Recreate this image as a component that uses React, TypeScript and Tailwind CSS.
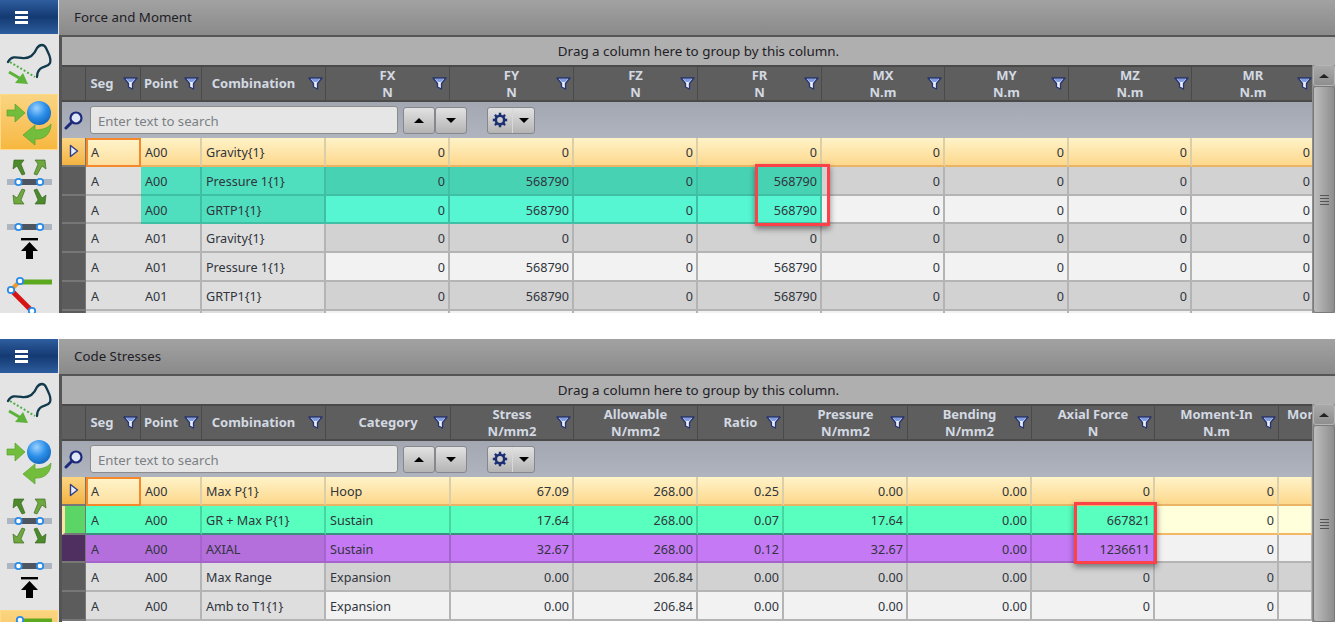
import type { ReactNode } from "react";

type Col = { title: string; unit?: string; width: string; pad?: string; clipped?: boolean };

const fixedCols: Col[] = [
  { title: "Seg", width: "w-[55px]", pad: "pr-[22px]" },
  { title: "Point", width: "w-[61px]", pad: "pr-[20px]" },
  { title: "Combination", width: "w-[124px]", pad: "pr-[20px]" },
];

const forceCols: Col[] = [
  { title: "FX", unit: "N", width: "w-[124px]" },
  { title: "FY", unit: "N", width: "w-[124px]" },
  { title: "FZ", unit: "N", width: "w-[124px]" },
  { title: "FR", unit: "N", width: "w-[124px]" },
  { title: "MX", unit: "N.m", width: "w-[123px]" },
  { title: "MY", unit: "N.m", width: "w-[124px]" },
  { title: "MZ", unit: "N.m", width: "w-[123px]" },
  { title: "MR", unit: "N.m", width: "w-[123px]" },
];

const stressCols: Col[] = [
  { title: "Category", width: "w-[125px]" },
  { title: "Stress", unit: "N/mm2", width: "w-[123px]" },
  { title: "Allowable", unit: "N/mm2", width: "w-[124px]" },
  { title: "Ratio", width: "w-[86px]" },
  { title: "Pressure", unit: "N/mm2", width: "w-[124px]" },
  { title: "Bending", unit: "N/mm2", width: "w-[124px]" },
  { title: "Axial Force", unit: "N", width: "w-[123px]" },
  { title: "Moment-In", unit: "N.m", width: "w-[124px]" },
  { title: "Mor", unit: "\u00a0", width: "w-[34px]", clipped: true },
];

const GRAY = "bg-[#d2d2d2]";
const LIGHT = "bg-[#f2f2f2]";
const FIXED = "bg-[#dedede]";
const SELECTED = "bg-gradient-to-b from-[#fff3c8] to-[#fdd88c]";
const PLAIN_LINE = "border-[#b4b4b4]";

type Row = {
  seg: string;
  point: string;
  combination: string;
  values: string[];
  bg: string;
  fixedBg?: string;
  segBg?: string;
  indicator?: string;
  valueBgs?: string[];
  selected?: boolean;
  plainLine?: string;
  line?: string;
};

const teal = { line: "border-[#3fbfa4]", fixedBg: "bg-[#4fdfbe]", segBg: FIXED };
const selectedLine = "border-r-[#dccfa8] border-b-[#e9b465]";

const forceRows: Row[] = [
  { seg: "A", point: "A00", combination: "Gravity{1}", values: ["0", "0", "0", "0", "0", "0", "0", "0"], bg: SELECTED, selected: true, plainLine: selectedLine, line: selectedLine },
  {
    seg: "A", point: "A00", combination: "Pressure 1{1}", values: ["0", "568790", "0", "568790", "0", "0", "0", "0"], bg: GRAY, ...teal,
    valueBgs: ["bg-[#48d2b4]", "bg-[#48d2b4]", "bg-[#48d2b4]", "bg-[#48d2b4]"],
  },
  {
    seg: "A", point: "A00", combination: "GRTP1{1}", values: ["0", "568790", "0", "568790", "0", "0", "0", "0"], bg: LIGHT, ...teal,
    valueBgs: ["bg-[#56f6d3]", "bg-[#56f6d3]", "bg-[#56f6d3]", "bg-[#56f6d3]"],
  },
  { seg: "A", point: "A01", combination: "Gravity{1}", values: ["0", "0", "0", "0", "0", "0", "0", "0"], bg: GRAY },
  { seg: "A", point: "A01", combination: "Pressure 1{1}", values: ["0", "568790", "0", "568790", "0", "0", "0", "0"], bg: LIGHT },
  { seg: "A", point: "A01", combination: "GRTP1{1}", values: ["0", "568790", "0", "568790", "0", "0", "0", "0"], bg: GRAY },
  { seg: "", point: "", combination: "", values: ["", "", "", "", "", "", "", ""], bg: LIGHT },
];

const mint = "bg-[#58ffbe]";
const purple = "bg-[#c679f5]";

const stressRows: Row[] = [
  { seg: "A", point: "A00", combination: "Max P{1}", values: ["Hoop", "67.09", "268.00", "0.25", "0.00", "0.00", "0", "0", ""], bg: SELECTED, selected: true, plainLine: selectedLine, line: selectedLine },
  {
    seg: "A", point: "A00", combination: "GR + Max P{1}", values: ["Sustain", "17.64", "268.00", "0.07", "17.64", "0.00", "667821", "0", ""], bg: "bg-[#ffffdc]", fixedBg: mint, segBg: mint,
    indicator: "border-l-[3px] border-l-[#ffe2a6] bg-[#5ad566]", plainLine: "border-r-[#d8d8c0] border-b-[#f6b765]", line: "border-r-[#46d8a0] border-b-[#3c8f80]",
    valueBgs: [mint, mint, mint, mint, mint, mint, mint],
  },
  {
    seg: "A", point: "A00", combination: "AXIAL", values: ["Sustain", "32.67", "268.00", "0.12", "32.67", "0.00", "1236611", "0", ""], bg: LIGHT, fixedBg: "bg-[#b46fdc]", segBg: "bg-[#b46fdc]", indicator: "bg-[#4e2f5f]", line: "border-[#a563cc]",
    valueBgs: [purple, purple, purple, purple, purple, purple, purple],
  },
  { seg: "A", point: "A00", combination: "Max Range", values: ["Expansion", "0.00", "206.84", "0.00", "0.00", "0.00", "0", "0", ""], bg: GRAY },
  { seg: "A", point: "A00", combination: "Amb to T1{1}", values: ["Expansion", "0.00", "206.84", "0.00", "0.00", "0.00", "0", "0", ""], bg: LIGHT },
];

function FilterIcon() {
  return (
    <svg width="15" height="15" viewBox="0 0 15 15" className="shrink-0">
      <path d="M1 2 H14 L9.5 7.5 V13 L5.5 11 V7.5 Z" fill="#e8eefa" stroke="#26336f" strokeWidth="1.3" strokeLinejoin="round" />
      <path d="M3 3 H12 L9 6 H6 Z" fill="#7f9ce0" />
    </svg>
  );
}

function HeaderCell({ col }: { col: Col }) {
  return (
    <div className={`${col.width} ${col.pad ?? ""} ${col.clipped ? "justify-start pl-[8px]" : "justify-center"} relative flex shrink-0 items-center overflow-hidden border-r border-[#4a4a4a] text-center text-[13px] leading-[17px] font-bold text-[#d3d9e2]`}>
      {col.unit ? (
        <div>
          <div className="whitespace-nowrap">{col.title}</div>
          <div className="whitespace-nowrap">{col.unit}</div>
        </div>
      ) : (
        <span className="whitespace-nowrap">{col.title}</span>
      )}
      {!col.clipped && (
        <span className="absolute top-[9px] right-[2px]">
          <FilterIcon />
        </span>
      )}
    </div>
  );
}

function Hamburger() {
  return (
    <div className="flex h-[34px] w-[58px] shrink-0 flex-col justify-center gap-[2px] bg-gradient-to-b from-[#2f5e9f] via-[#143a72] to-[#2d5d9e] pl-[15px]">
      <div className="h-[3px] w-[13px] bg-white" />
      <div className="h-[3px] w-[13px] bg-white" />
      <div className="h-[3px] w-[13px] bg-white" />
    </div>
  );
}

function Node({ x, y }: { x: number; y: number }) {
  return <circle cx={x} cy={y} r="3.2" fill="white" stroke="#2a8ce8" strokeWidth="1.8" />;
}

function NodeBar({ y }: { y: number }) {
  return (
    <>
      <rect x="7" y={y - 3} width="45" height="6" fill="#adb6c0" />
      <rect x="18" y={y - 3} width="22" height="6" fill="#4d5660" />
      <Node x={18.5} y={y} />
      <Node x={40} y={y} />
    </>
  );
}

function RouteIcon() {
  return (
    <svg width="58" height="60" viewBox="0 0 58 60">
      <path d="M8 28 C11 22 16 23 22 24 C29 25 34 21 37 14 C40 10 44 10 46 14 C48 19 52 24 50 29 C48 33 43 32 40 35 C37 38 37 40 37 43" fill="none" stroke="#123a4c" strokeWidth="2.3" strokeLinecap="round" />
      <path d="M10 28 L35 43" fill="none" stroke="#4fae45" strokeWidth="2" strokeDasharray="2 2" />
      <path d="M9 38 L21 45" fill="none" stroke="#5db33a" strokeWidth="3" />
      <path d="M28 50 L15 49 L23 39 Z" fill="#5db33a" />
    </svg>
  );
}

function ForceIcon() {
  return (
    <svg width="58" height="56" viewBox="0 0 58 56">
      <defs>
        <radialGradient id="ball" cx="0.4" cy="0.3" r="0.8">
          <stop offset="0" stopColor="#9ad2ff" />
          <stop offset="0.5" stopColor="#2b8ee8" />
          <stop offset="1" stopColor="#0f5fb5" />
        </radialGradient>
      </defs>
      <path d="M7 16 H15 V10 L25 19 L15 28 V22 H7 Z" fill="#72bd3c" stroke="#5aa02e" strokeWidth="0.7" />
      <circle cx="39" cy="19" r="12" fill="url(#ball)" />
      <path d="M23 41 L35 31 V36 C42 36 48 34 51 30 C51 40 44 46 35 45 V51 Z" fill="#72bd3c" stroke="#5aa02e" strokeWidth="0.7" />
    </svg>
  );
}

function ShrinkIcon() {
  return (
    <svg width="58" height="56" viewBox="0 0 58 56">
      <path d="M14 10 L24 10 L21 14 L25 24 L22 25 L17 16 L13 19 Z" fill="#4c8a2c" stroke="#2f5e1a" strokeWidth="0.6" />
      <path d="M45 10 L35 10 L38 14 L34 24 L37 25 L42 16 L46 19 Z" fill="#6fa83f" stroke="#2f5e1a" strokeWidth="0.6" />
      <path d="M14 54 L24 54 L21 50 L25 40 L22 39 L17 48 L13 45 Z" fill="#6fa83f" stroke="#2f5e1a" strokeWidth="0.6" />
      <path d="M45 54 L35 54 L38 50 L34 40 L37 39 L42 48 L46 45 Z" fill="#4c8a2c" stroke="#2f5e1a" strokeWidth="0.6" />
      <NodeBar y={32} />
    </svg>
  );
}

function PinIcon() {
  return (
    <svg width="58" height="65" viewBox="0 0 58 65">
      <NodeBar y={21} />
      <rect x="21" y="32" width="17" height="2.4" fill="#000" />
      <path d="M29.5 36 L38 45 H33 V53 H26 V45 H21 Z" fill="#000" />
    </svg>
  );
}

function SegmentIcon() {
  return (
    <svg width="58" height="50" viewBox="0 0 58 50">
      <path d="M20 11 H52" stroke="#5ca81f" strokeWidth="5" />
      <path d="M11 19 L20 10" stroke="#f19a27" strokeWidth="4" />
      <path d="M11 19 L32 40" stroke="#d61414" strokeWidth="5" />
      <Node x={20} y={10} />
      <Node x={11} y={19} />
      <Node x={32} y={40} />
    </svg>
  );
}

function Sidebar({ active }: { active: "force" | "segment" }) {
  return (
    <div className="flex w-[59px] shrink-0 flex-col bg-[#e4e4e4]">
      <Hamburger />
      <div className="h-[60px] w-[58px] shrink-0">
        <RouteIcon />
      </div>
      <div className={`h-[56px] w-[58px] shrink-0 ${active === "force" ? "bg-gradient-to-b from-[#fbd582] to-[#f6b73d] outline outline-1 -outline-offset-1 outline-[#ffd987]" : ""}`}>
        <ForceIcon />
      </div>
      <div className="h-[56px] w-[58px] shrink-0">
        <ShrinkIcon />
      </div>
      <div className="h-[65px] w-[58px] shrink-0">
        <PinIcon />
      </div>
      <div className={`h-[50px] w-[58px] shrink-0 ${active === "segment" ? "bg-gradient-to-b from-[#fbd582] to-[#f6b73d] outline outline-1 -outline-offset-1 outline-[#ffd987]" : ""}`}>
        <SegmentIcon />
      </div>
    </div>
  );
}

function Cell({ className, right, children }: { className: string; right?: boolean; children?: ReactNode }) {
  return (
    <div className={`${className} flex h-full shrink-0 items-center overflow-hidden border-r-2 border-b-2 pt-[4px] pr-[3px] pl-[4px] whitespace-nowrap ${right ? "justify-end" : ""}`}>
      {children}
    </div>
  );
}

function DataRow({ row, cols, numericFrom }: { row: Row; cols: Col[]; numericFrom: number }) {
  const indicator = row.selected ? "bg-gradient-to-b from-[#fbd582] to-[#f4b340]" : row.indicator ?? "bg-[#5c5c5c]";
  const line = row.line ?? PLAIN_LINE;
  const plain = row.plainLine ?? PLAIN_LINE;
  const segLine = row.segBg === FIXED ? PLAIN_LINE : line;
  return (
    <div className="flex h-[28.8px] shrink-0 text-[12.6px] text-[#30343c]">
      <div className={`${indicator} flex w-[24px] shrink-0 items-center justify-center border-r border-b-2 border-r-[#777] border-b-[#777]`}>
        {row.selected && (
          <svg width="10" height="14" viewBox="0 0 10 14">
            <path d="M1.5 1.5 L8.5 7 L1.5 12.5 Z" fill="#e9edf8" stroke="#2e3f86" strokeWidth="1.4" strokeLinejoin="round" />
          </svg>
        )}
      </div>
      {row.selected ? (
        <div className={`${fixedCols[0].width} flex shrink-0 items-center border-2 border-[#f5882a] bg-gradient-to-b from-[#fff3c8] to-[#fde0a0] px-[3px] pt-[2px]`}>
          {row.seg}
        </div>
      ) : (
        <div className={`${fixedCols[0].width} ${row.segBg ?? FIXED} ${segLine} flex shrink-0 items-center border-b-2 px-[5px] pt-[4px]`}>
          {row.seg}
        </div>
      )}
      <Cell className={`${fixedCols[1].width} ${row.selected ? SELECTED : row.fixedBg ?? FIXED} ${line}`}>{row.point}</Cell>
      <Cell className={`${fixedCols[2].width} ${row.selected ? SELECTED : row.fixedBg ?? FIXED} ${line}`}>{row.combination}</Cell>
      {cols.map((col, i) => (
        <Cell key={col.title} className={`${col.width} ${row.valueBgs?.[i] ?? row.bg} ${row.valueBgs?.[i] ? line : plain}`} right={i >= numericFrom}>
          {row.values[i]}
        </Cell>
      ))}
    </div>
  );
}

function SearchBar() {
  return (
    <div className="flex h-[36px] shrink-0 items-center bg-gradient-to-b from-[#a3a7b2] to-[#b0b4be]">
      <div className="flex h-full w-[24px] shrink-0 items-center justify-center">
        <svg width="20" height="20" viewBox="0 0 20 20">
          <circle cx="12" cy="8" r="5.5" fill="#dfe6f7" stroke="#1d2a7a" strokeWidth="2.2" />
          <path d="M8 12 L2 18" stroke="#1d2a7a" strokeWidth="3" strokeLinecap="round" />
        </svg>
      </div>
      <div className="ml-[4px] flex h-[28px] w-[308px] items-center rounded-[3px] border border-[#8c8c8c] bg-[#e6e6e6] px-[7px] pt-[3px] text-[13.2px] text-[#7b7f85]">
        Enter text to search
      </div>
      <div className="ml-[5px] flex h-[27px] w-[32px] items-center justify-center rounded-[3px] border border-[#85878c] bg-gradient-to-b from-[#e2e2e2] to-[#b4b4b4]">
        <div className="h-0 w-0 border-x-[5px] border-b-[5px] border-x-transparent border-b-black" />
      </div>
      <div className="flex h-[27px] w-[32px] items-center justify-center rounded-[3px] border border-[#85878c] bg-gradient-to-b from-[#e2e2e2] to-[#b4b4b4]">
        <div className="h-0 w-0 border-x-[5px] border-t-[5px] border-x-transparent border-t-black" />
      </div>
      <div className="ml-[20px] flex h-[27px] w-[48px] items-center rounded-[3px] border border-[#85878c] bg-gradient-to-b from-[#e2e2e2] to-[#b4b4b4]">
        <div className="flex h-full w-[25px] items-center justify-center border-r border-[#d8d8d8]">
          <svg width="16" height="16" viewBox="0 0 16 16">
            <circle cx="8" cy="8" r="4.2" fill="none" stroke="#1d2f73" strokeWidth="2.6" />
            <path d="M8 0.8 V3 M8 13 V15.2 M0.8 8 H3 M13 8 H15.2 M2.9 2.9 L4.5 4.5 M11.5 11.5 L13.1 13.1 M13.1 2.9 L11.5 4.5 M4.5 11.5 L2.9 13.1" stroke="#1d2f73" strokeWidth="2.4" />
          </svg>
        </div>
        <div className="flex flex-1 justify-center">
          <div className="h-0 w-0 border-x-[5px] border-t-[5px] border-x-transparent border-t-black" />
        </div>
      </div>
    </div>
  );
}

function Scrollbar() {
  return (
    <div className="flex w-[23px] shrink-0 flex-col bg-[#8e8e8e] pl-[1px]">
      <div className="flex h-[21px] shrink-0 items-center justify-center rounded-[3px] border border-[#b5b5b5] bg-gradient-to-b from-[#a9a9a9] to-[#8f8f8f]">
        <div className="h-0 w-0 border-x-[5px] border-b-[4px] border-x-transparent border-b-[#222]" />
      </div>
      <div className="flex flex-1 flex-col items-center justify-center gap-[2px] rounded-[3px] border border-[#7a7a7a] bg-gradient-to-r from-[#bdbdbd] to-[#8e8e8e]">
        <div className="h-[1px] w-[9px] bg-[#555]" />
        <div className="h-[1px] w-[9px] bg-[#555]" />
        <div className="h-[1px] w-[9px] bg-[#555]" />
        <div className="h-[1px] w-[9px] bg-[#555]" />
      </div>
    </div>
  );
}

function Callout({ className }: { className: string }) {
  return <div className={`absolute border-[3px] border-[#fc4148] shadow-[0_3px_6px_rgba(0,0,0,0.45)] ${className}`} />;
}

function Panel({
  title,
  height,
  cols,
  rows,
  numericFrom,
  active,
  callout,
}: {
  title: string;
  height: string;
  cols: Col[];
  rows: Row[];
  numericFrom: number;
  active: "force" | "segment";
  callout: string;
}) {
  return (
    <div className={`relative flex shrink-0 overflow-hidden ${height}`}>
      <Sidebar active={active} />
      <div className="flex min-w-0 flex-1 flex-col">
        <div className="flex h-[37px] shrink-0 items-center border-b-2 border-[#555] bg-gradient-to-b from-[#a2a2a2] to-[#8a8a8a] pl-[15px] text-[13.3px] text-[#1e2026]">
          {title}
        </div>
        <div className="flex min-h-0 flex-1 flex-col border-l-[3px] border-[#555]">
          <div className="flex h-[28px] shrink-0 items-center justify-center bg-[#afafaf] pt-[1px] text-[13.4px] text-[#1e2026]">
            Drag a column here to group by this column.
          </div>
          <div className="flex min-h-0 flex-1">
            <div className="flex w-[1250px] shrink-0 flex-col overflow-hidden">
              <div className="flex h-[37px] shrink-0 border-y-2 border-[#4a4a4a] bg-[#5e5e5e]">
                <div className="w-[24px] shrink-0 border-r border-[#4a4a4a]" />
                {fixedCols.concat(cols).map((col) => (
                  <HeaderCell key={col.title} col={col} />
                ))}
              </div>
              <SearchBar />
              {rows.map((row, i) => (
                <DataRow key={i} row={row} cols={cols} numericFrom={numericFrom} />
              ))}
            </div>
            <Scrollbar />
          </div>
        </div>
      </div>
      <Callout className={callout} />
    </div>
  );
}

export default function App() {
  return (
    <div className="flex h-[622px] w-[1335px] flex-col overflow-hidden bg-white font-['Noto_Sans',sans-serif]">
      <Panel title="Force and Moment" height="h-[313px]" cols={forceCols} rows={forceRows} numericFrom={0} active="force" callout="top-[164px] left-[755px] h-[62px] w-[75px]" />
      <div className="h-[26px] shrink-0" />
      <Panel title="Code Stresses" height="h-[283px]" cols={stressCols} rows={stressRows} numericFrom={1} active="segment" callout="top-[163px] left-[1074px] h-[62px] w-[83px]" />
    </div>
  );
}
